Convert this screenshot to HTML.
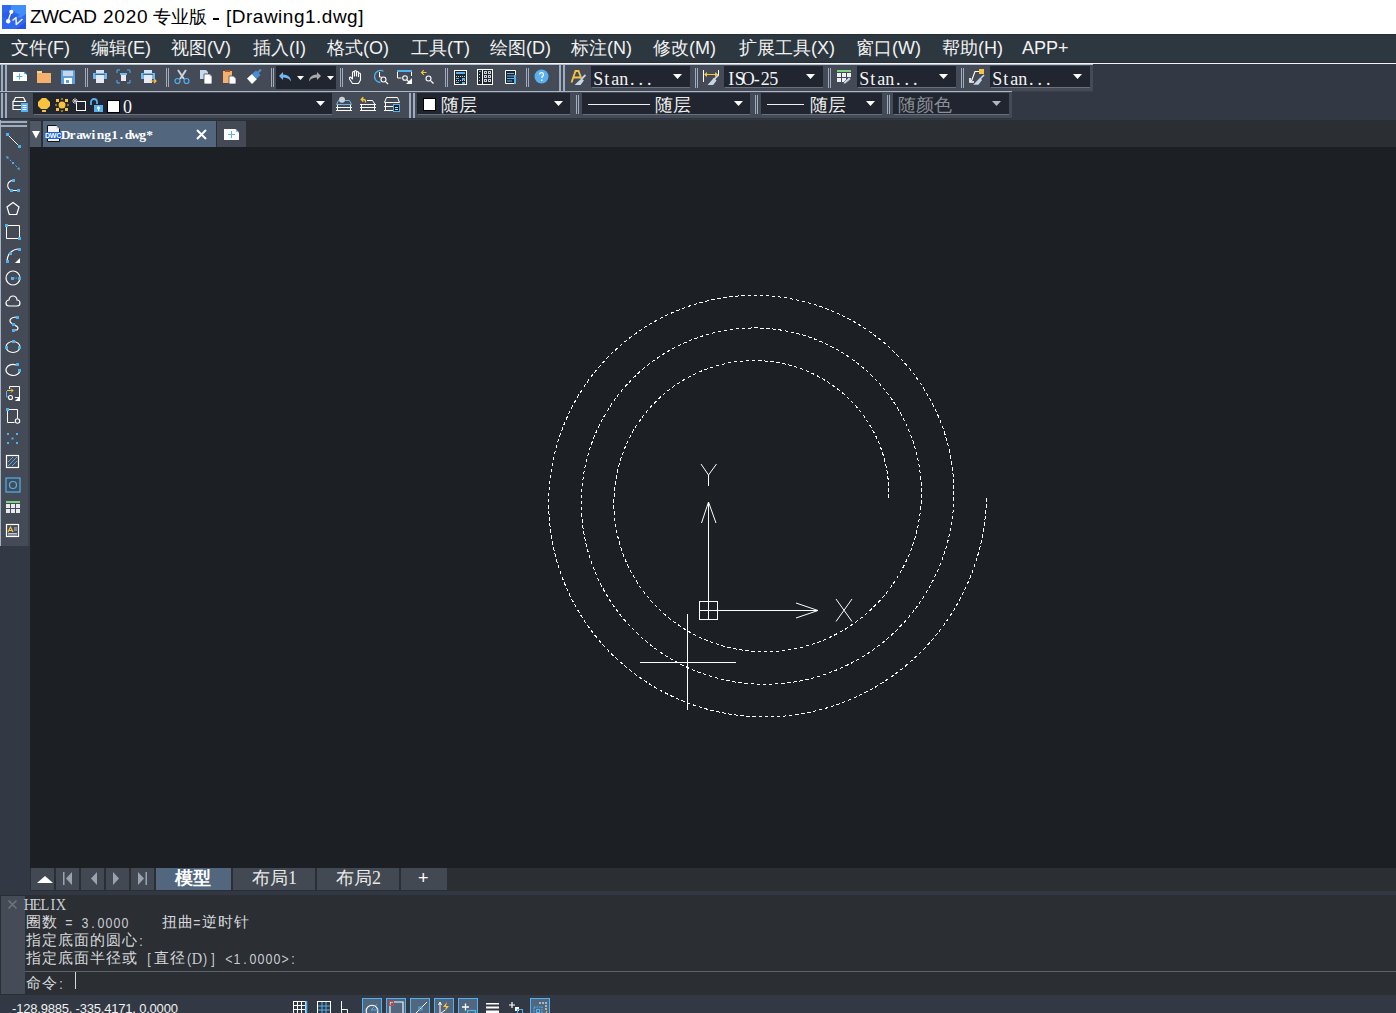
<!DOCTYPE html>
<html><head><meta charset="utf-8">
<style>
*{margin:0;padding:0;box-sizing:border-box}
html,body{width:1396px;height:1013px;overflow:hidden;background:#1c1f23;font-family:"Liberation Sans",sans-serif;position:relative}
.a{position:absolute;display:block}
.tx{white-space:nowrap}
</style></head><body>
<div class="a" style="left:0px;top:0px;width:1396px;height:34px;background:#ffffff;"></div>
<svg class="a" style="left:2px;top:5px" width="24" height="24" viewBox="0 0 24 24"><rect width="24" height="24" fill="#2f66f2"/><path d="M9 0h15v9l-6 4-9-6z" fill="#3f8ef9"/><path d="M0 9l9-4 9 5-9 4-9-2z" fill="#2a5ae6" opacity=".7"/><path d="M14 24l10-7v7z" fill="#2855e0"/><path d="M9.3 6.5L6 16" stroke="#fff" stroke-width="1.3"/><circle cx="9.3" cy="6.8" r="2.1" fill="#fff"/><circle cx="6.2" cy="16.3" r="2.2" fill="#fff"/><path d="M10.5 15.5L14 12.5L14.3 19.5L20.5 14" stroke="#e8ecf8" stroke-width="1.6" fill="none" stroke-linejoin="round"/></svg>
<div class="a tx" style="left:30px;top:4px;font-size:19px;color:#000;line-height:26px;letter-spacing:-0.7px">ZWCAD</div>
<div class="a tx" style="left:103px;top:4px;font-size:19px;color:#000;line-height:26px;letter-spacing:0.8px">2020</div>
<div class="a tx" style="left:153px;top:4px;font-size:18.2px;color:#000;line-height:26px;letter-spacing:0px">专业版</div>
<div class="a" style="left:213px;top:18px;width:6px;height:2px;background:#000;"></div>
<div class="a tx" style="left:226px;top:4px;font-size:19px;color:#000;line-height:26px;letter-spacing:0.5px">[Drawing1.dwg]</div>
<div class="a" style="left:0px;top:34px;width:1396px;height:1px;background:#262c33;"></div>
<div class="a" style="left:0px;top:35px;width:1396px;height:28px;background:#2d3740;"></div>
<div class="a" style="left:0px;top:62px;width:1396px;height:1px;background:#272d34;"></div>
<div class="a tx" style="left:11px;top:36px;font-size:18px;color:#f2f2f2;line-height:24px">文件(F)</div>
<div class="a tx" style="left:91px;top:36px;font-size:18px;color:#f2f2f2;line-height:24px">编辑(E)</div>
<div class="a tx" style="left:171px;top:36px;font-size:18px;color:#f2f2f2;line-height:24px">视图(V)</div>
<div class="a tx" style="left:253px;top:36px;font-size:18px;color:#f2f2f2;line-height:24px">插入(I)</div>
<div class="a tx" style="left:327px;top:36px;font-size:18px;color:#f2f2f2;line-height:24px">格式(O)</div>
<div class="a tx" style="left:411px;top:36px;font-size:18px;color:#f2f2f2;line-height:24px">工具(T)</div>
<div class="a tx" style="left:490px;top:36px;font-size:18px;color:#f2f2f2;line-height:24px">绘图(D)</div>
<div class="a tx" style="left:571px;top:36px;font-size:18px;color:#f2f2f2;line-height:24px">标注(N)</div>
<div class="a tx" style="left:653px;top:36px;font-size:18px;color:#f2f2f2;line-height:24px">修改(M)</div>
<div class="a tx" style="left:739px;top:36px;font-size:18px;color:#f2f2f2;line-height:24px">扩展工具(X)</div>
<div class="a tx" style="left:856px;top:36px;font-size:18px;color:#f2f2f2;line-height:24px">窗口(W)</div>
<div class="a tx" style="left:942px;top:36px;font-size:18px;color:#f2f2f2;line-height:24px">帮助(H)</div>
<div class="a tx" style="left:1022px;top:36px;font-size:18px;color:#f2f2f2;line-height:24px">APP+</div>
<div class="a" style="left:0px;top:63px;width:1396px;height:57px;background:#323944;"></div>
<div class="a" style="left:0px;top:63px;width:1396px;height:1px;background:#f4f6f8;"></div>
<div class="a" style="left:0px;top:64px;width:1093px;height:1px;background:#b4c0ce;"></div>
<div class="a" style="left:0px;top:65px;width:1093px;height:26px;background:#454b56;"></div>
<div class="a" style="left:0px;top:91px;width:1012px;height:1px;background:#a9b6c5;"></div>
<div class="a" style="left:0px;top:92px;width:1012px;height:26px;background:#454b56;"></div>
<div class="a" style="left:0px;top:118px;width:1012px;height:1px;background:#2e343c;"></div>
<div class="a" style="left:1012px;top:91px;width:81px;height:1px;background:#3a4049;"></div>
<div class="a" style="left:1px;top:65px;width:2px;height:26px;background:#9dacbf;"></div>
<div class="a" style="left:5px;top:65px;width:2px;height:26px;background:#9dacbf;"></div>
<svg class="a" style="left:12px;top:69px" width="16" height="16" viewBox="0 0 16 16"><path d="M1 3h11l3 3v6H1z" fill="#ffffff"/><path d="M12 2.5l2.5 2.5h-2.5z" fill="#4fb2f2"/><path d="M7.5 4.5v6M4.5 7.5h6" stroke="#4fb2f2" stroke-width="1"/></svg>
<svg class="a" style="left:36px;top:69px" width="16" height="16" viewBox="0 0 16 16"><rect x="1" y="2" width="5" height="2" fill="#f9d58e"/><rect x="1" y="4" width="14" height="10" fill="#f5b16b"/></svg>
<svg class="a" style="left:60px;top:69px" width="16" height="16" viewBox="0 0 16 16"><path d="M1 1h13l1 1v13H1z" fill="#5a9fe0"/><rect x="3" y="2" width="10" height="5" fill="#c8d6e8"/><rect x="4" y="9" width="8" height="6" fill="#ffffff"/><rect x="6" y="11" width="3" height="3" fill="#5a9fe0"/></svg>
<div class="a" style="left:85px;top:68px;width:1px;height:19px;background:#9dacbf;"></div>
<div class="a" style="left:87px;top:68px;width:1px;height:19px;background:#9dacbf;"></div>
<svg class="a" style="left:93px;top:69px" width="16" height="16" viewBox="0 0 16 16"><rect x="3" y="1" width="8" height="3" fill="#dde3ec"/><rect x="0" y="4" width="14" height="6" fill="#72b8f0"/><rect x="2" y="5" width="10" height="1" fill="#2e6aa8"/><rect x="3" y="6" width="8" height="8" fill="#e6ebf3"/></svg>
<svg class="a" style="left:116px;top:69px" width="16" height="16" viewBox="0 0 16 16"><path d="M1 4V1h3M11 1h3v3M14 11v3h-3M4 14H1v-3" stroke="#4fb2f2" fill="none" stroke-width="1"/><rect x="4" y="4" width="7" height="2" fill="#72b8f0"/><rect x="5" y="6" width="5" height="6" fill="#e6ebf3"/></svg>
<svg class="a" style="left:141px;top:69px" width="16" height="16" viewBox="0 0 16 16"><rect x="3" y="1" width="8" height="3" fill="#dde3ec"/><rect x="0" y="4" width="14" height="6" fill="#72b8f0"/><rect x="2" y="5" width="10" height="1" fill="#2e6aa8"/><rect x="3" y="6" width="8" height="8" fill="#e6ebf3"/><path d="M9 12h6M13 10l2 2-2 2" stroke="#f8c440" fill="none" stroke-width="1.2"/></svg>
<div class="a" style="left:166px;top:68px;width:1px;height:19px;background:#9dacbf;"></div>
<div class="a" style="left:168px;top:68px;width:1px;height:19px;background:#9dacbf;"></div>
<svg class="a" style="left:174px;top:69px" width="16" height="16" viewBox="0 0 16 16"><path d="M4 1l6 9M12 1l-6 9" stroke="#c9d2de" stroke-width="2"/><circle cx="3.5" cy="12" r="2.5" stroke="#4fb2f2" fill="none" stroke-width="1.2"/><circle cx="12.5" cy="12" r="2.5" stroke="#4fb2f2" fill="none" stroke-width="1.2"/></svg>
<svg class="a" style="left:199px;top:69px" width="16" height="16" viewBox="0 0 16 16"><path d="M1 1h6l2 2v7H1z" fill="#c6d8ee"/><path d="M5 5h5.5l2.5 2.5V15H5z" fill="#ffffff" stroke="#454b56" stroke-width="0.8"/><path d="M10.5 5v2.5H13" fill="#c8ccd2"/></svg>
<svg class="a" style="left:222px;top:69px" width="16" height="16" viewBox="0 0 16 16"><rect x="1" y="2" width="9" height="12" fill="#f5b16b"/><rect x="3" y="1" width="5" height="2" fill="#a8552a"/><path d="M7 7h4.5l2.5 2.5V15H7z" fill="#ffffff" stroke="#454b56" stroke-width="0.8"/></svg>
<svg class="a" style="left:246px;top:69px" width="16" height="16" viewBox="0 0 16 16"><path d="M1 9.5l5-4.5 5 5-5 5z" fill="#ffffff"/><path d="M6 5l4-3.5 4.5 4.5-4 4z" fill="#4a8fd6"/><path d="M12 3.5l3-3" stroke="#4a8fd6" stroke-width="2.2"/></svg>
<div class="a" style="left:271px;top:68px;width:1px;height:19px;background:#9dacbf;"></div>
<div class="a" style="left:273px;top:68px;width:1px;height:19px;background:#9dacbf;"></div>
<div class="a" style="left:276px;top:66px;width:60px;height:23px;background:#20252f;"></div>
<svg class="a" style="left:279px;top:72px" width="12" height="10" viewBox="0 0 12 10"><path d="M4 0L0 4l4 4V5.5c4 0 6 1 8 4c0-4-3-7-8-7z" fill="#78b6f0"/></svg>
<svg class="a" style="left:297px;top:76px" width="7" height="4" viewBox="0 0 7 4"><path d="M0 0h7L3.5 4z" fill="#fff"/></svg>
<svg class="a" style="left:309px;top:72px" width="12" height="10" viewBox="0 0 12 10"><path d="M8 0l4 4-4 4V5.5c-4 0-6 1-8 4c0-4 3-7 8-7z" fill="#a9a9a9"/></svg>
<svg class="a" style="left:327px;top:76px" width="7" height="4" viewBox="0 0 7 4"><path d="M0 0h7L3.5 4z" fill="#fff"/></svg>
<div class="a" style="left:340px;top:68px;width:1px;height:19px;background:#9dacbf;"></div>
<div class="a" style="left:342px;top:68px;width:1px;height:19px;background:#9dacbf;"></div>
<svg class="a" style="left:348px;top:69px" width="16" height="16" viewBox="0 0 16 16"><path d="M4.5 14.5L1.5 10V8.5L2.5 8l2 2V3.5a1 1 0 0 1 2 0V7V2.5a1 1 0 0 1 2 0V7V3.5a1 1 0 0 1 2 0V7.5V5a1 1 0 0 1 2 0V11l-2 3.5z" stroke="#ffffff" fill="none" stroke-width="1.1" stroke-linejoin="round"/></svg>
<svg class="a" style="left:373px;top:69px" width="16" height="16" viewBox="0 0 16 16"><path d="M10.5 2.3A6 6 0 1 0 7.5 13.5" stroke="#4fb2f2" fill="none" stroke-width="1.3"/><path d="M6.5 3v5h2" stroke="#ffffff" fill="none" stroke-width="1"/><circle cx="10.5" cy="10.5" r="2.5" stroke="#ffffff" fill="none" stroke-width="1.1"/><path d="M12.3 12.3l2.7 2.7" stroke="#ffffff" stroke-width="1.2"/></svg>
<svg class="a" style="left:397px;top:69px" width="16" height="16" viewBox="0 0 16 16"><rect x="0" y="1" width="15" height="2" fill="#4fb2f2"/><path d="M0.5 3v6h4M14.5 3v4" stroke="#ffffff" fill="none" stroke-width="1"/><circle cx="8" cy="9" r="2.3" stroke="#ffffff" fill="none" stroke-width="1.1"/><path d="M10 11l2 2" stroke="#ffffff" stroke-width="1.1"/><path d="M15 9v6H9z" fill="#ffffff"/></svg>
<svg class="a" style="left:420px;top:69px" width="16" height="16" viewBox="0 0 16 16"><path d="M1.5 3.5h5M3.8 1.2L1.5 3.5l2.3 2.3" stroke="#f8c440" fill="none" stroke-width="1.1"/><circle cx="8.5" cy="9.5" r="2.5" stroke="#ffffff" fill="none" stroke-width="1.1"/><path d="M10.3 11.3l3.2 3.2" stroke="#ffffff" stroke-width="1.2"/></svg>
<div class="a" style="left:445px;top:68px;width:1px;height:19px;background:#9dacbf;"></div>
<div class="a" style="left:447px;top:68px;width:1px;height:19px;background:#9dacbf;"></div>
<svg class="a" style="left:452px;top:69px" width="16" height="16" viewBox="0 0 16 16"><rect x="2" y="1" width="13" height="15" fill="#fff"/><rect x="3" y="2" width="11" height="13" fill="#20252d"/><rect x="4" y="3" width="9" height="2" fill="#4fb2f2"/><path d="M4 7.5h9M4 11.5h9" stroke="#c8d0da" stroke-width="1" stroke-dasharray="1 1"/><rect x="4" y="9" width="3" height="1" fill="#4fb2f2"/><rect x="10" y="9" width="3" height="2" fill="#4fb2f2"/><rect x="4" y="13" width="3" height="1" fill="#4fb2f2"/><rect x="10" y="13" width="3" height="2" fill="#4fb2f2"/></svg>
<svg class="a" style="left:477px;top:69px" width="16" height="16" viewBox="0 0 16 16"><rect x="0.5" y="0.5" width="15" height="15" fill="#20252d" stroke="#ffffff" stroke-width="1"/><path d="M5.5 1v14" stroke="#ffffff"/><rect x="2" y="2" width="2" height="1" fill="#4fb2f2"/><path d="M2 5.5h2M2 8.5h2M2 11.5h2" stroke="#c8d0da" stroke-dasharray="1 1"/><g fill="none" stroke="#c8d0da"><rect x="7.5" y="2.5" width="2" height="2"/><rect x="11.5" y="2.5" width="2" height="2"/><rect x="7.5" y="6.5" width="2" height="2"/><rect x="11.5" y="6.5" width="2" height="2"/><rect x="7.5" y="10.5" width="2" height="2"/><rect x="11.5" y="10.5" width="2" height="2"/></g></svg>
<svg class="a" style="left:503px;top:69px" width="16" height="16" viewBox="0 0 16 16"><path d="M2.5 1.5h10v13h-10z" fill="#20252d" stroke="#ffffff" stroke-width="1"/><path d="M4 4.5h7M4 7h7M4 9.5h7M4 12h5" stroke="#4fb2f2" stroke-width="1"/><rect x="11" y="6" width="2" height="9" fill="#4fb2f2"/></svg>
<div class="a" style="left:526px;top:68px;width:1px;height:19px;background:#9dacbf;"></div>
<div class="a" style="left:528px;top:68px;width:1px;height:19px;background:#9dacbf;"></div>
<svg class="a" style="left:534px;top:69px" width="16" height="16" viewBox="0 0 16 16"><circle cx="7.5" cy="7.5" r="7" fill="#58b0f0"/><path d="M5.5 5.5a2 2 0 1 1 2.5 2v1.5" stroke="#ffffff" fill="none" stroke-width="1.2"/><rect x="7" y="10.5" width="1.5" height="1.5" fill="#ffffff"/></svg>
<div class="a" style="left:559px;top:65px;width:2px;height:26px;background:#9dacbf;"></div>
<div class="a" style="left:563px;top:65px;width:2px;height:26px;background:#9dacbf;"></div>
<svg class="a" style="left:570px;top:69px" width="16" height="16" viewBox="0 0 16 16"><path d="M1.5 13.5L5.5 2H8.5L11 8.5M3.5 8.5H11.5" stroke="#f8c440" fill="none" stroke-width="1.8"/><path d="M6.5 15.5l5-5 1.2 1.2-3 4z M11 10.5l4.5-4.5" stroke="#c8d6e8" fill="#c8d6e8" stroke-width="1.8"/></svg>
<div class="a" style="left:591px;top:66px;width:99px;height:21px;background:#20252f;"></div>
<div class="a" style="left:592px;top:87px;width:98px;height:1px;background:#6a7079;"></div>
<svg class="a" style="left:673px;top:74px" width="9" height="5" viewBox="0 0 9 5"><path d="M0 0h9L4.5 5z" fill="#ffffff"/></svg>
<div class="a" style="left:591.25px;top:69px;width:14px;text-align:center;font-family:'Liberation Serif',serif;font-size:18px;color:#f4f4f4;line-height:20px">S</div><div class="a" style="left:599.75px;top:69px;width:14px;text-align:center;font-family:'Liberation Serif',serif;font-size:18px;color:#f4f4f4;line-height:20px">t</div><div class="a" style="left:608.25px;top:69px;width:14px;text-align:center;font-family:'Liberation Serif',serif;font-size:18px;color:#f4f4f4;line-height:20px">a</div><div class="a" style="left:616.75px;top:69px;width:14px;text-align:center;font-family:'Liberation Serif',serif;font-size:18px;color:#f4f4f4;line-height:20px">n</div><div class="a" style="left:625.25px;top:69px;width:14px;text-align:center;font-family:'Liberation Serif',serif;font-size:18px;color:#f4f4f4;line-height:20px">.</div><div class="a" style="left:633.75px;top:69px;width:14px;text-align:center;font-family:'Liberation Serif',serif;font-size:18px;color:#f4f4f4;line-height:20px">.</div><div class="a" style="left:642.25px;top:69px;width:14px;text-align:center;font-family:'Liberation Serif',serif;font-size:18px;color:#f4f4f4;line-height:20px">.</div>
<div class="a" style="left:695px;top:68px;width:1px;height:20px;background:#9dacbf;"></div>
<div class="a" style="left:697px;top:68px;width:1px;height:20px;background:#9dacbf;"></div>
<svg class="a" style="left:703px;top:69px" width="16" height="16" viewBox="0 0 16 16"><path d="M0.5 1v12M15.5 1v6" stroke="#ffffff" stroke-width="1"/><path d="M2 5.5h13" stroke="#f8c440" stroke-width="1"/><path d="M1 5.5l3-2.5v5zM15 5.5l-3-2.5v5z" fill="#f8c440"/><path d="M6 15.5l5-5.5 1.5 1.5-3 4z M11 10.5l4.5-4.5" stroke="#c8d6e8" fill="#c8d6e8" stroke-width="1.6"/></svg>
<div class="a" style="left:724px;top:66px;width:99px;height:21px;background:#20252f;"></div>
<div class="a" style="left:725px;top:87px;width:98px;height:1px;background:#6a7079;"></div>
<svg class="a" style="left:806px;top:74px" width="9" height="5" viewBox="0 0 9 5"><path d="M0 0h9L4.5 5z" fill="#ffffff"/></svg>
<div class="a" style="left:724.25px;top:69px;width:14px;text-align:center;font-family:'Liberation Serif',serif;font-size:18px;color:#f4f4f4;line-height:20px">I</div><div class="a" style="left:732.75px;top:69px;width:14px;text-align:center;font-family:'Liberation Serif',serif;font-size:18px;color:#f4f4f4;line-height:20px">S</div><div class="a" style="left:741.25px;top:69px;width:14px;text-align:center;font-family:'Liberation Serif',serif;font-size:18px;color:#f4f4f4;line-height:20px">O</div><div class="a" style="left:749.75px;top:69px;width:14px;text-align:center;font-family:'Liberation Serif',serif;font-size:18px;color:#f4f4f4;line-height:20px">-</div><div class="a" style="left:758.25px;top:69px;width:14px;text-align:center;font-family:'Liberation Serif',serif;font-size:18px;color:#f4f4f4;line-height:20px">2</div><div class="a" style="left:766.75px;top:69px;width:14px;text-align:center;font-family:'Liberation Serif',serif;font-size:18px;color:#f4f4f4;line-height:20px">5</div>
<div class="a" style="left:828px;top:68px;width:1px;height:20px;background:#9dacbf;"></div>
<div class="a" style="left:830px;top:68px;width:1px;height:20px;background:#9dacbf;"></div>
<svg class="a" style="left:836px;top:69px" width="16" height="16" viewBox="0 0 16 16"><rect x="1" y="1" width="14" height="2" fill="#7ed37e"/><g fill="#eef0f3"><rect x="1" y="4" width="4" height="4"/><rect x="6" y="4" width="4" height="4"/><rect x="11" y="4" width="4" height="4"/><rect x="1" y="9" width="4" height="4"/><rect x="6" y="9" width="4" height="4"/></g><path d="M7 14l6-6 2 2-6 5z" fill="#c8d6e8" stroke="#434a55" stroke-width="0.6"/></svg>
<div class="a" style="left:857px;top:66px;width:99px;height:21px;background:#20252f;"></div>
<div class="a" style="left:858px;top:87px;width:98px;height:1px;background:#6a7079;"></div>
<svg class="a" style="left:939px;top:74px" width="9" height="5" viewBox="0 0 9 5"><path d="M0 0h9L4.5 5z" fill="#ffffff"/></svg>
<div class="a" style="left:857.25px;top:69px;width:14px;text-align:center;font-family:'Liberation Serif',serif;font-size:18px;color:#f4f4f4;line-height:20px">S</div><div class="a" style="left:865.75px;top:69px;width:14px;text-align:center;font-family:'Liberation Serif',serif;font-size:18px;color:#f4f4f4;line-height:20px">t</div><div class="a" style="left:874.25px;top:69px;width:14px;text-align:center;font-family:'Liberation Serif',serif;font-size:18px;color:#f4f4f4;line-height:20px">a</div><div class="a" style="left:882.75px;top:69px;width:14px;text-align:center;font-family:'Liberation Serif',serif;font-size:18px;color:#f4f4f4;line-height:20px">n</div><div class="a" style="left:891.25px;top:69px;width:14px;text-align:center;font-family:'Liberation Serif',serif;font-size:18px;color:#f4f4f4;line-height:20px">.</div><div class="a" style="left:899.75px;top:69px;width:14px;text-align:center;font-family:'Liberation Serif',serif;font-size:18px;color:#f4f4f4;line-height:20px">.</div><div class="a" style="left:908.25px;top:69px;width:14px;text-align:center;font-family:'Liberation Serif',serif;font-size:18px;color:#f4f4f4;line-height:20px">.</div>
<div class="a" style="left:961px;top:68px;width:1px;height:20px;background:#9dacbf;"></div>
<div class="a" style="left:963px;top:68px;width:1px;height:20px;background:#9dacbf;"></div>
<svg class="a" style="left:969px;top:69px" width="16" height="16" viewBox="0 0 16 16"><rect x="10" y="0" width="5" height="5" fill="#f8c440"/><path d="M10 2.5H6L2.5 12" stroke="#ffffff" fill="none" stroke-width="1.1"/><path d="M1 9v4h4" stroke="#ffffff" fill="none" stroke-width="1.6"/><path d="M6 15l5-5 1 1-3 4z M11 10l4-4" stroke="#c8d6e8" fill="#c8d6e8" stroke-width="1.6"/></svg>
<div class="a" style="left:990px;top:66px;width:100px;height:21px;background:#20252f;"></div>
<div class="a" style="left:991px;top:87px;width:99px;height:1px;background:#6a7079;"></div>
<svg class="a" style="left:1073px;top:74px" width="9" height="5" viewBox="0 0 9 5"><path d="M0 0h9L4.5 5z" fill="#ffffff"/></svg>
<div class="a" style="left:990.25px;top:69px;width:14px;text-align:center;font-family:'Liberation Serif',serif;font-size:18px;color:#f4f4f4;line-height:20px">S</div><div class="a" style="left:998.75px;top:69px;width:14px;text-align:center;font-family:'Liberation Serif',serif;font-size:18px;color:#f4f4f4;line-height:20px">t</div><div class="a" style="left:1007.25px;top:69px;width:14px;text-align:center;font-family:'Liberation Serif',serif;font-size:18px;color:#f4f4f4;line-height:20px">a</div><div class="a" style="left:1015.75px;top:69px;width:14px;text-align:center;font-family:'Liberation Serif',serif;font-size:18px;color:#f4f4f4;line-height:20px">n</div><div class="a" style="left:1024.25px;top:69px;width:14px;text-align:center;font-family:'Liberation Serif',serif;font-size:18px;color:#f4f4f4;line-height:20px">.</div><div class="a" style="left:1032.75px;top:69px;width:14px;text-align:center;font-family:'Liberation Serif',serif;font-size:18px;color:#f4f4f4;line-height:20px">.</div><div class="a" style="left:1041.25px;top:69px;width:14px;text-align:center;font-family:'Liberation Serif',serif;font-size:18px;color:#f4f4f4;line-height:20px">.</div>
<div class="a" style="left:1px;top:93px;width:2px;height:25px;background:#9dacbf;"></div>
<div class="a" style="left:5px;top:93px;width:2px;height:25px;background:#9dacbf;"></div>
<svg class="a" style="left:12px;top:96px" width="16" height="16" viewBox="0 0 16 16"><path d="M3.5 1.5H11.5L13.5 5.5H1.5z" stroke="#ffffff" fill="none" stroke-width="1.2"/><path d="M0.5 5.5h10M0.5 9.5h9M0.5 13.5h9M1 5.5v8" stroke="#ffffff" fill="none" stroke-width="1.2"/><rect x="9" y="7" width="7" height="9" fill="#58b0f0"/><path d="M10.5 9.5h4M10.5 11.5h4M10.5 13.5h4" stroke="#ffffff" stroke-width="1"/></svg>
<div class="a" style="left:33px;top:93px;width:299px;height:21px;background:#20252f;"></div>
<div class="a" style="left:34px;top:114px;width:298px;height:1px;background:#6a7079;"></div>
<svg class="a" style="left:316px;top:101px" width="9" height="5" viewBox="0 0 9 5"><path d="M0 0h9L4.5 5z" fill="#ffffff"/></svg>
<svg class="a" style="left:38px;top:98px" width="16" height="16" viewBox="0 0 16 16"><path d="M4 0h4l4 4v4l-3 3H3L0 8V4z" fill="#f8c440"/><rect x="4" y="12" width="4" height="2" fill="#f8c440"/></svg>
<svg class="a" style="left:55px;top:98px" width="16" height="16" viewBox="0 0 16 16"><g fill="#f8c440"><rect x="1" y="1" width="3" height="3"/><rect x="10" y="1" width="3" height="3"/><rect x="1" y="10" width="3" height="3"/><rect x="10" y="10" width="3" height="3"/><circle cx="7" cy="7" r="3.5"/><path d="M5.5 1.5h3L7 0zM5.5 12.5h3L7 14zM1.5 5.5v3L0 7zM12.5 5.5v3L14 7z"/></g></svg>
<svg class="a" style="left:72px;top:98px" width="16" height="16" viewBox="0 0 16 16"><rect x="4.5" y="3.5" width="9" height="9" fill="none" stroke="#ffffff" stroke-width="1"/><path d="M3 0v6M0 3h6M1 1l4 4M5 1L1 5" stroke="#c0c4c8" stroke-width="1"/></svg>
<svg class="a" style="left:89px;top:98px" width="16" height="16" viewBox="0 0 16 16"><path d="M2 7V4a3 3 0 0 1 6 0v2" stroke="#58b0f0" fill="none" stroke-width="1.8"/><rect x="5" y="7" width="9" height="7" fill="#58b0f0"/><circle cx="9.5" cy="10" r="1.4" fill="#ffffff"/><rect x="9" y="10" width="1.2" height="3" fill="#ffffff"/></svg>
<div class="a" style="left:107px;top:100px;width:13px;height:13px;background:#000;"></div>
<div class="a" style="left:108px;top:101px;width:11px;height:11px;background:#fff;"></div>
<div class="a tx" style="left:123px;top:96px;font-family:'Liberation Serif',serif;font-size:18px;color:#f4f4f4;line-height:22px">0</div>
<svg class="a" style="left:336px;top:96px" width="16" height="16" viewBox="0 0 16 16"><path d="M0 11.5h16M0 14.5h16M1.5 8.5v6M14.5 8.5v6" stroke="#ffffff" fill="none" stroke-width="1"/><path d="M2.5 4.5H13.5L15.5 8.5H0.5z" stroke="#6fb6f2" fill="none" stroke-width="1"/><circle cx="6" cy="3.8" r="3" fill="#c8d0dc"/></svg>
<svg class="a" style="left:360px;top:96px" width="16" height="16" viewBox="0 0 16 16"><path d="M0 8.5h16M0 11.5h16M0 14.5h16M1.5 8.5v6M14.5 8.5v6M7 4.5h5.5l2.5 4" stroke="#ffffff" fill="none" stroke-width="1"/><path d="M5.5 6.5v-1a2 2 0 0 0-2-2H1.5M3.3 1.3L1.2 3.5l2.1 2.1" stroke="#f8c440" fill="none" stroke-width="1.3"/></svg>
<svg class="a" style="left:384px;top:96px" width="16" height="16" viewBox="0 0 16 16"><path d="M2.5 1.5H13.5L15.5 6.5H0.5z" stroke="#ffffff" fill="none" stroke-width="1"/><path d="M0 10.5h9M0 14.5h9M1.5 6.5v8" stroke="#ffffff" fill="none" stroke-width="1"/><rect x="9.5" y="8.5" width="6" height="7" fill="#20252d" stroke="#58b0f0" stroke-width="1"/><path d="M11 11.5h3M11 13.5h3" stroke="#c0e4ff" stroke-width="1"/></svg>
<div class="a" style="left:409px;top:93px;width:2px;height:25px;background:#9dacbf;"></div>
<div class="a" style="left:413px;top:93px;width:2px;height:25px;background:#9dacbf;"></div>
<div class="a" style="left:417px;top:93px;width:153px;height:21px;background:#20252f;"></div>
<div class="a" style="left:418px;top:114px;width:152px;height:1px;background:#6a7079;"></div>
<svg class="a" style="left:554px;top:101px" width="9" height="5" viewBox="0 0 9 5"><path d="M0 0h9L4.5 5z" fill="#ffffff"/></svg>
<div class="a" style="left:423px;top:98px;width:13px;height:13px;background:#000;"></div>
<div class="a" style="left:424px;top:99px;width:11px;height:11px;background:#fff;"></div>
<div class="a tx" style="left:441px;top:94px;font-size:18px;font-weight:200;color:#f0f0f0;line-height:22px">随层</div>
<div class="a" style="left:576px;top:95px;width:1px;height:19px;background:#9dacbf;"></div>
<div class="a" style="left:578px;top:95px;width:1px;height:19px;background:#9dacbf;"></div>
<div class="a" style="left:582px;top:93px;width:168px;height:21px;background:#20252f;"></div>
<div class="a" style="left:583px;top:114px;width:167px;height:1px;background:#6a7079;"></div>
<svg class="a" style="left:734px;top:101px" width="9" height="5" viewBox="0 0 9 5"><path d="M0 0h9L4.5 5z" fill="#ffffff"/></svg>
<div class="a" style="left:588px;top:104px;width:62px;height:1px;background:#f0f0f0;"></div>
<div class="a tx" style="left:655px;top:94px;font-size:18px;font-weight:200;color:#f0f0f0;line-height:22px">随层</div>
<div class="a" style="left:755px;top:95px;width:1px;height:19px;background:#9dacbf;"></div>
<div class="a" style="left:757px;top:95px;width:1px;height:19px;background:#9dacbf;"></div>
<div class="a" style="left:761px;top:93px;width:121px;height:21px;background:#20252f;"></div>
<div class="a" style="left:762px;top:114px;width:120px;height:1px;background:#6a7079;"></div>
<svg class="a" style="left:866px;top:101px" width="9" height="5" viewBox="0 0 9 5"><path d="M0 0h9L4.5 5z" fill="#ffffff"/></svg>
<div class="a" style="left:767px;top:104px;width:37px;height:1px;background:#f0f0f0;"></div>
<div class="a tx" style="left:810px;top:94px;font-size:18px;font-weight:200;color:#f0f0f0;line-height:22px">随层</div>
<div class="a" style="left:887px;top:95px;width:1px;height:19px;background:#9dacbf;"></div>
<div class="a" style="left:889px;top:95px;width:1px;height:19px;background:#9dacbf;"></div>
<div class="a" style="left:893px;top:93px;width:116px;height:21px;background:#20252f;"></div>
<div class="a" style="left:894px;top:114px;width:115px;height:1px;background:#6a7079;"></div>
<svg class="a" style="left:992px;top:101px" width="9" height="5" viewBox="0 0 9 5"><path d="M0 0h9L4.5 5z" fill="#b4b8bd"/></svg>
<div class="a tx" style="left:898px;top:94px;font-size:18px;font-weight:200;color:#8a8f96;line-height:22px">随颜色</div>
<div class="a" style="left:0px;top:120px;width:1396px;height:27px;background:#2b2e33;"></div>
<div class="a" style="left:30px;top:121px;width:11px;height:26px;background:#4d5864;"></div>
<svg class="a" style="left:32px;top:131px" width="8" height="8" viewBox="0 0 8 8"><path d="M0 0h8L4 7.5z" fill="#fff"/></svg>
<div class="a" style="left:43px;top:121px;width:173px;height:26px;background:#52667e;"></div>
<svg class="a" style="left:45px;top:125px" width="16" height="18" viewBox="0 0 16 18"><path d="M2.5 0.5h9l3 3v13h-12z" fill="#f4f4f4" stroke="#111" stroke-width="1"/><path d="M11.5 0.5v3h3" fill="#ccc"/><rect x="0" y="7" width="16" height="7" fill="#1e64e0"/><text x="8" y="13" font-size="7" font-family="Liberation Sans" font-weight="bold" fill="#fff" text-anchor="middle" letter-spacing="-0.3">DWC</text></svg>
<div class="a" style="left:59.50px;top:126px;width:12px;text-align:center;font-family:'Liberation Serif',serif;font-size:13.5px;font-weight:bold;color:#fff;line-height:18px">D</div><div class="a" style="left:66.50px;top:126px;width:12px;text-align:center;font-family:'Liberation Serif',serif;font-size:13.5px;font-weight:bold;color:#fff;line-height:18px">r</div><div class="a" style="left:73.50px;top:126px;width:12px;text-align:center;font-family:'Liberation Serif',serif;font-size:13.5px;font-weight:bold;color:#fff;line-height:18px">a</div><div class="a" style="left:80.50px;top:126px;width:12px;text-align:center;font-family:'Liberation Serif',serif;font-size:13.5px;font-weight:bold;color:#fff;line-height:18px">w</div><div class="a" style="left:87.50px;top:126px;width:12px;text-align:center;font-family:'Liberation Serif',serif;font-size:13.5px;font-weight:bold;color:#fff;line-height:18px">i</div><div class="a" style="left:94.50px;top:126px;width:12px;text-align:center;font-family:'Liberation Serif',serif;font-size:13.5px;font-weight:bold;color:#fff;line-height:18px">n</div><div class="a" style="left:101.50px;top:126px;width:12px;text-align:center;font-family:'Liberation Serif',serif;font-size:13.5px;font-weight:bold;color:#fff;line-height:18px">g</div><div class="a" style="left:108.50px;top:126px;width:12px;text-align:center;font-family:'Liberation Serif',serif;font-size:13.5px;font-weight:bold;color:#fff;line-height:18px">1</div><div class="a" style="left:115.50px;top:126px;width:12px;text-align:center;font-family:'Liberation Serif',serif;font-size:13.5px;font-weight:bold;color:#fff;line-height:18px">.</div><div class="a" style="left:122.50px;top:126px;width:12px;text-align:center;font-family:'Liberation Serif',serif;font-size:13.5px;font-weight:bold;color:#fff;line-height:18px">d</div><div class="a" style="left:129.50px;top:126px;width:12px;text-align:center;font-family:'Liberation Serif',serif;font-size:13.5px;font-weight:bold;color:#fff;line-height:18px">w</div><div class="a" style="left:136.50px;top:126px;width:12px;text-align:center;font-family:'Liberation Serif',serif;font-size:13.5px;font-weight:bold;color:#fff;line-height:18px">g</div><div class="a" style="left:143.50px;top:126px;width:12px;text-align:center;font-family:'Liberation Serif',serif;font-size:13.5px;font-weight:bold;color:#fff;line-height:18px">*</div>
<svg class="a" style="left:196px;top:129px" width="11" height="11" viewBox="0 0 11 11"><path d="M1 1l9 9M10 1L1 10" stroke="#fff" stroke-width="2"/></svg>
<div class="a" style="left:217px;top:121px;width:29px;height:26px;background:#434a55;"></div>
<svg class="a" style="left:224px;top:129px" width="15" height="11" viewBox="0 0 15 11"><path d="M0 0h11.5l3.5 3.5V11H0z" fill="#fff"/><path d="M12 0.5l2.5 2.5h-2.5z" fill="#80c4f4"/><path d="M7.5 2v7M4 5.5h7" stroke="#58b0f0" stroke-width="1"/></svg>
<div class="a" style="left:30px;top:147px;width:1366px;height:721px;background:#1c1f23;"></div>
<svg class="a" style="left:0;top:0" width="1396" height="1013"><polyline points="888.70,498.00 888.77,495.97 888.80,493.94 888.80,491.90 888.77,489.87 888.71,487.83 888.61,485.80 888.49,483.76 888.33,481.73 888.14,479.69 887.91,477.66 887.66,475.63 887.37,473.61 887.05,471.59 886.70,469.57 886.32,467.55 885.90,465.54 885.46,463.54 884.98,461.55 884.47,459.55 883.93,457.57 883.35,455.60 882.75,453.63 882.11,451.67 881.45,449.72 880.75,447.78 880.02,445.85 879.26,443.93 878.47,442.02 877.65,440.12 876.80,438.23 875.92,436.36 875.00,434.50 874.06,432.65 873.09,430.82 872.09,429.00 871.06,427.20 870.01,425.41 868.92,423.64 867.81,421.88 866.66,420.14 865.49,418.42 864.29,416.71 863.07,415.03 861.81,413.36 860.53,411.71 859.23,410.08 857.89,408.47 856.53,406.88 855.15,405.31 853.74,403.76 852.30,402.23 850.84,400.73 849.36,399.24 847.85,397.78 846.32,396.35 844.76,394.93 843.19,393.54 841.58,392.18 839.96,390.84 838.32,389.52 836.65,388.23 834.96,386.96 833.25,385.72 831.52,384.51 829.77,383.32 828.01,382.16 826.22,381.03 824.41,379.92 822.59,378.85 820.75,377.80 818.89,376.78 817.01,375.79 815.12,374.82 813.21,373.89 811.28,372.99 809.34,372.11 807.39,371.27 805.42,370.46 803.44,369.67 801.44,368.92 799.43,368.20 797.41,367.51 795.38,366.85 793.33,366.23 791.28,365.63 789.21,365.07 787.14,364.54 785.05,364.04 782.96,363.58 780.86,363.15 778.75,362.75 776.63,362.38 774.51,362.05 772.38,361.75 770.24,361.48 768.10,361.25 765.96,361.05 763.81,360.88 761.66,360.75 759.50,360.65 757.34,360.59 755.18,360.55 753.02,360.56 750.86,360.60 748.69,360.67 746.53,360.77 744.37,360.91 742.20,361.09 740.04,361.29 737.89,361.54 735.73,361.81 733.58,362.12 731.43,362.47 729.29,362.84 727.15,363.26 725.02,363.70 722.89,364.18 720.77,364.69 718.66,365.24 716.55,365.82 714.46,366.44 712.37,367.08 710.29,367.76 708.22,368.48 706.16,369.22 704.11,370.00 702.07,370.81 700.05,371.66 698.03,372.53 696.03,373.44 694.05,374.38 692.07,375.35 690.12,376.36 688.17,377.39 686.24,378.46 684.33,379.55 682.44,380.68 680.56,381.84 678.70,383.03 676.85,384.24 675.03,385.49 673.22,386.77 671.43,388.07 669.66,389.41 667.92,390.77 666.19,392.16 664.48,393.58 662.80,395.02 661.14,396.50 659.50,398.00 657.88,399.52 656.29,401.08 654.72,402.65 653.17,404.26 651.65,405.89 650.15,407.54 648.68,409.22 647.24,410.92 645.82,412.65 644.43,414.39 643.06,416.16 641.72,417.96 640.41,419.77 639.13,421.61 637.87,423.47 636.65,425.35 635.45,427.24 634.28,429.16 633.14,431.10 632.04,433.05 630.96,435.03 629.91,437.02 628.90,439.03 627.91,441.06 626.96,443.10 626.04,445.16 625.15,447.23 624.29,449.32 623.46,451.42 622.67,453.54 621.91,455.67 621.19,457.82 620.49,459.97 619.83,462.14 619.21,464.32 618.62,466.51 618.06,468.71 617.54,470.92 617.05,473.14 616.60,475.37 616.18,477.60 615.79,479.85 615.45,482.10 615.13,484.35 614.85,486.62 614.61,488.88 614.41,491.16 614.23,493.43 614.10,495.72 614.00,498.00 613.94,500.29 613.91,502.58 613.92,504.87 613.96,507.16 614.04,509.45 614.16,511.74 614.31,514.03 614.50,516.32 614.73,518.60 614.99,520.89 615.28,523.17 615.62,525.45 615.99,527.72 616.39,529.99 616.83,532.25 617.31,534.51 617.82,536.76 618.37,539.00 618.95,541.24 619.57,543.47 620.23,545.68 620.91,547.89 621.64,550.09 622.40,552.28 623.19,554.46 624.02,556.63 624.89,558.78 625.78,560.92 626.71,563.05 627.68,565.17 628.68,567.27 629.71,569.35 630.78,571.42 631.88,573.48 633.01,575.51 634.17,577.53 635.37,579.54 636.60,581.52 637.86,583.49 639.15,585.44 640.47,587.37 641.83,589.28 643.21,591.16 644.63,593.03 646.07,594.88 647.55,596.70 649.05,598.50 650.58,600.28 652.14,602.03 653.73,603.77 655.35,605.47 657.00,607.15 658.67,608.81 660.37,610.44 662.09,612.05 663.85,613.63 665.62,615.18 667.42,616.70 669.25,618.20 671.10,619.67 672.98,621.11 674.88,622.52 676.80,623.90 678.74,625.25 680.71,626.58 682.70,627.87 684.71,629.13 686.73,630.36 688.78,631.56 690.85,632.72 692.94,633.86 695.05,634.96 697.18,636.03 699.32,637.07 701.48,638.07 703.66,639.04 705.85,639.98 708.06,640.88 710.28,641.75 712.52,642.58 714.78,643.38 717.04,644.14 719.32,644.87 721.61,645.56 723.92,646.22 726.23,646.84 728.56,647.42 730.89,647.97 733.24,648.48 735.59,648.95 737.95,649.39 740.32,649.79 742.70,650.16 745.09,650.48 747.48,650.77 749.87,651.02 752.27,651.24 754.68,651.41 757.09,651.55 759.50,651.65 761.91,651.71 764.33,651.74 766.75,651.72 769.17,651.67 771.59,651.58 774.01,651.45 776.42,651.29 778.84,651.09 781.25,650.84 783.66,650.56 786.07,650.25 788.47,649.89 790.87,649.50 793.27,649.06 795.65,648.59 798.04,648.09 800.41,647.54 802.78,646.96 805.13,646.34 807.48,645.68 809.82,644.99 812.15,644.25 814.47,643.48 816.78,642.68 819.08,641.84 821.36,640.96 823.63,640.04 825.89,639.09 828.14,638.10 830.37,637.08 832.58,636.02 834.78,634.93 836.96,633.80 839.12,632.64 841.27,631.44 843.40,630.21 845.51,628.94 847.60,627.64 849.68,626.31 851.73,624.94 853.76,623.54 855.77,622.11 857.76,620.65 859.73,619.15 861.67,617.63 863.59,616.07 865.49,614.48 867.36,612.86 869.21,611.21 871.03,609.53 872.82,607.82 874.60,606.08 876.34,604.32 878.06,602.52 879.74,600.70 881.41,598.85 883.04,596.97 884.64,595.07 886.22,593.14 887.76,591.19 889.28,589.21 890.76,587.20 892.21,585.18 893.64,583.12 895.03,581.05 896.38,578.95 897.71,576.83 899.00,574.69 900.26,572.53 901.49,570.35 902.68,568.14 903.84,565.92 904.96,563.68 906.05,561.42 907.10,559.14 908.12,556.84 909.10,554.53 910.05,552.20 910.96,549.86 911.83,547.50 912.67,545.12 913.47,542.73 914.23,540.33 914.95,537.91 915.64,535.49 916.29,533.05 916.90,530.60 917.47,528.14 918.01,525.66 918.50,523.18 918.96,520.69 919.38,518.20 919.76,515.69 920.10,513.18 920.39,510.66 920.66,508.14 920.88,505.61 921.06,503.08 921.20,500.54 921.30,498.00 921.36,495.46 921.38,492.91 921.36,490.37 921.31,487.82 921.21,485.27 921.07,482.73 920.89,480.18 920.67,477.64 920.41,475.10 920.11,472.56 919.77,470.03 919.39,467.50 918.98,464.97 918.52,462.46 918.02,459.94 917.48,457.44 916.90,454.94 916.28,452.45 915.63,449.97 914.93,447.50 914.20,445.04 913.42,442.58 912.61,440.15 911.76,437.72 910.87,435.30 909.94,432.90 908.97,430.51 907.97,428.14 906.92,425.78 905.84,423.43 904.73,421.11 903.57,418.80 902.38,416.50 901.15,414.23 899.89,411.97 898.59,409.73 897.25,407.51 895.88,405.31 894.48,403.14 893.04,400.98 891.56,398.85 890.05,396.73 888.51,394.64 886.93,392.58 885.32,390.54 883.68,388.52 882.01,386.53 880.30,384.56 878.56,382.62 876.79,380.71 874.99,378.82 873.16,376.96 871.30,375.13 869.41,373.33 867.49,371.56 865.54,369.81 863.57,368.10 861.57,366.42 859.54,364.77 857.48,363.14 855.39,361.56 853.29,360.00 851.15,358.47 848.99,356.98 846.81,355.53 844.60,354.10 842.37,352.71 840.12,351.36 837.84,350.04 835.55,348.75 833.23,347.50 830.89,346.29 828.53,345.11 826.15,343.97 823.76,342.87 821.34,341.80 818.91,340.77 816.46,339.78 814.00,338.83 811.51,337.92 809.02,337.04 806.51,336.21 803.98,335.41 801.44,334.65 798.89,333.93 796.32,333.26 793.75,332.62 791.16,332.02 788.57,331.46 785.96,330.95 783.34,330.47 780.72,330.04 778.09,329.64 775.45,329.29 772.80,328.98 770.15,328.71 767.49,328.48 764.83,328.30 762.17,328.15 759.50,328.05 756.83,327.99 754.16,327.97 751.48,327.99 748.81,328.06 746.13,328.17 743.46,328.32 740.79,328.51 738.12,328.74 735.45,329.02 732.79,329.34 730.13,329.70 727.47,330.10 724.82,330.54 722.18,331.03 719.54,331.56 716.91,332.13 714.29,332.74 711.68,333.39 709.07,334.08 706.48,334.82 703.90,335.59 701.32,336.41 698.76,337.27 696.22,338.17 693.68,339.10 691.16,340.08 688.66,341.10 686.17,342.16 683.69,343.26 681.23,344.39 678.79,345.57 676.37,346.79 673.96,348.04 671.58,349.33 669.21,350.66 666.86,352.03 664.54,353.43 662.23,354.88 659.95,356.35 657.69,357.87 655.45,359.42 653.24,361.01 651.05,362.63 648.88,364.29 646.74,365.98 644.63,367.71 642.54,369.47 640.48,371.26 638.45,373.09 636.45,374.95 634.47,376.84 632.52,378.76 630.60,380.71 628.72,382.70 626.86,384.72 625.03,386.76 623.24,388.84 621.48,390.94 619.75,393.07 618.05,395.23 616.39,397.42 614.76,399.63 613.16,401.87 611.60,404.14 610.08,406.43 608.59,408.75 607.13,411.09 605.72,413.46 604.33,415.84 602.99,418.25 601.68,420.69 600.42,423.14 599.18,425.61 597.99,428.11 596.84,430.62 595.73,433.16 594.65,435.71 593.62,438.28 592.62,440.86 591.67,443.47 590.75,446.09 589.88,448.72 589.05,451.37 588.26,454.03 587.51,456.71 586.80,459.40 586.14,462.10 585.52,464.81 584.94,467.53 584.40,470.27 583.90,473.01 583.45,475.76 583.04,478.52 582.68,481.29 582.36,484.06 582.08,486.84 581.84,489.62 581.65,492.41 581.50,495.20 581.40,498.00 581.34,500.80 581.32,503.60 581.35,506.40 581.43,509.20 581.54,512.01 581.70,514.81 581.91,517.61 582.16,520.40 582.45,523.20 582.79,525.99 583.17,528.77 583.59,531.56 584.06,534.33 584.58,537.10 585.13,539.86 585.73,542.62 586.38,545.36 587.06,548.10 587.79,550.82 588.57,553.54 589.38,556.24 590.24,558.94 591.14,561.62 592.09,564.28 593.07,566.94 594.10,569.57 595.17,572.20 596.29,574.80 597.44,577.39 598.63,579.97 599.87,582.52 601.14,585.06 602.46,587.57 603.82,590.07 605.21,592.55 606.65,595.00 608.12,597.44 609.64,599.85 611.19,602.24 612.78,604.60 614.40,606.94 616.07,609.26 617.77,611.55 619.51,613.81 621.28,616.05 623.09,618.26 624.94,620.44 626.82,622.60 628.73,624.72 630.68,626.82 632.67,628.88 634.68,630.92 636.73,632.92 638.81,634.90 640.92,636.84 643.07,638.75 645.24,640.62 647.44,642.46 649.68,644.27 651.94,646.04 654.23,647.78 656.55,649.48 658.90,651.15 661.27,652.78 663.68,654.37 666.10,655.93 668.55,657.45 671.03,658.93 673.53,660.37 676.05,661.77 678.60,663.14 681.17,664.46 683.76,665.74 686.37,666.99 689.00,668.19 691.66,669.35 694.33,670.47 697.02,671.55 699.72,672.59 702.45,673.58 705.19,674.54 707.95,675.45 710.72,676.31 713.51,677.14 716.31,677.92 719.12,678.65 721.95,679.34 724.78,679.99 727.63,680.59 730.49,681.15 733.36,681.67 736.24,682.13 739.12,682.56 742.02,682.94 744.92,683.27 747.83,683.56 750.74,683.80 753.65,684.00 756.58,684.15 759.50,684.25 762.43,684.31 765.36,684.32 768.29,684.29 771.22,684.21 774.14,684.08 777.07,683.91 780.00,683.69 782.93,683.43 785.85,683.12 788.76,682.76 791.68,682.36 794.58,681.91 797.48,681.42 800.38,680.88 803.26,680.29 806.14,679.66 809.01,678.99 811.87,678.26 814.72,677.50 817.56,676.68 820.38,675.83 823.20,674.93 826.00,673.98 828.78,672.99 831.55,671.95 834.31,670.88 837.05,669.75 839.77,668.59 842.48,667.38 845.17,666.13 847.83,664.83 850.48,663.50 853.11,662.12 855.72,660.70 858.31,659.24 860.87,657.73 863.41,656.19 865.93,654.61 868.42,652.98 870.89,651.32 873.33,649.61 875.75,647.87 878.14,646.09 880.51,644.27 882.84,642.41 885.15,640.52 887.43,638.59 889.67,636.62 891.89,634.62 894.08,632.58 896.24,630.51 898.36,628.40 900.45,626.26 902.51,624.08 904.53,621.87 906.52,619.63 908.48,617.36 910.40,615.05 912.29,612.72 914.14,610.35 915.95,607.95 917.72,605.53 919.46,603.07 921.16,600.59 922.82,598.08 924.44,595.55 926.03,592.98 927.57,590.40 929.07,587.78 930.53,585.15 931.95,582.48 933.33,579.80 934.67,577.09 935.97,574.36 937.22,571.61 938.43,568.84 939.60,566.05 940.72,563.24 941.80,560.42 942.84,557.57 943.83,554.71 944.77,551.83 945.67,548.93 946.53,546.02 947.34,543.10 948.10,540.16 948.82,537.21 949.50,534.24 950.12,531.27 950.70,528.28 951.23,525.29 951.72,522.28 952.16,519.27 952.55,516.25 952.89,513.22 953.19,510.19 953.44,507.15 953.64,504.10 953.79,501.05 953.90,498.00 953.96,494.95 953.97,491.89 953.93,488.83 953.84,485.77 953.71,482.72 953.52,479.66 953.29,476.61 953.01,473.55 952.69,470.51 952.31,467.46 951.89,464.42 951.42,461.39 950.90,458.36 950.33,455.34 949.72,452.33 949.06,449.33 948.35,446.34 947.59,443.35 946.79,440.38 945.94,437.42 945.04,434.48 944.09,431.54 943.10,428.62 942.07,425.72 940.98,422.83 939.86,419.95 938.68,417.10 937.46,414.26 936.20,411.44 934.89,408.63 933.54,405.85 932.14,403.09 930.70,400.35 929.21,397.63 927.69,394.94 926.11,392.26 924.50,389.61 922.85,386.99 921.15,384.39 919.41,381.82 917.63,379.27 915.81,376.75 913.95,374.26 912.05,371.80 910.11,369.37 908.13,366.96 906.12,364.59 904.06,362.25 901.97,359.94 899.84,357.66 897.68,355.41 895.48,353.20 893.24,351.02 890.97,348.88 888.66,346.77 886.32,344.70 883.95,342.66 881.55,340.66 879.11,338.70 876.64,336.77 874.14,334.88 871.61,333.04 869.05,331.23 866.46,329.46 863.84,327.73 861.20,326.04 858.52,324.39 855.82,322.79 853.10,321.23 850.35,319.71 847.57,318.23 844.77,316.79 841.95,315.40 839.10,314.05 836.23,312.75 833.34,311.49 830.43,310.28 827.50,309.11 824.56,307.99 821.59,306.91 818.60,305.88 815.60,304.90 812.58,303.97 809.55,303.08 806.50,302.24 803.44,301.44 800.36,300.70 797.27,300.00 794.17,299.35 791.06,298.75 787.94,298.20 784.80,297.69 781.66,297.24 778.52,296.84 775.36,296.48 772.20,296.18 769.03,295.92 765.86,295.71 762.68,295.56 759.50,295.45 756.32,295.39 753.13,295.39 749.95,295.43 746.76,295.52 743.58,295.67 740.39,295.86 737.21,296.11 734.03,296.40 730.86,296.74 727.69,297.14 724.52,297.58 721.36,298.08 718.21,298.62 715.07,299.21 711.93,299.86 708.80,300.55 705.69,301.29 702.58,302.08 699.49,302.92 696.40,303.81 693.34,304.75 690.28,305.74 687.24,306.77 684.22,307.86 681.21,308.99 678.22,310.16 675.24,311.39 672.29,312.66 669.35,313.98 666.43,315.35 663.54,316.76 660.66,318.22 657.81,319.72 654.98,321.27 652.18,322.87 649.40,324.50 646.64,326.19 643.91,327.91 641.21,329.68 638.53,331.50 635.88,333.35 633.26,335.25 630.67,337.19 628.10,339.17 625.57,341.19 623.07,343.25 620.60,345.35 618.17,347.50 615.76,349.68 613.39,351.89 611.06,354.15 608.76,356.44 606.49,358.77 604.26,361.14 602.07,363.54 599.92,365.98 597.80,368.45 595.72,370.96 593.68,373.50 591.68,376.07 589.72,378.67 587.80,381.31 585.92,383.98 584.08,386.67 582.28,389.40 580.53,392.16 578.82,394.94 577.15,397.75 575.52,400.59 573.94,403.45 572.41,406.34 570.92,409.26 569.47,412.20 568.07,415.16 566.72,418.15 565.41,421.16 564.16,424.19 562.94,427.24 561.78,430.30 560.66,433.39 559.59,436.50 558.57,439.63 557.60,442.77 556.68,445.93 555.81,449.10 554.99,452.29 554.22,455.49 553.49,458.70 552.82,461.93 552.20,465.17 551.63,468.42 551.11,471.67 550.64,474.94 550.22,478.22 549.86,481.50 549.54,484.79 549.28,488.09 549.07,491.39 548.91,494.69 548.80,498.00 548.74,501.31 548.74,504.62 548.79,507.94 548.89,511.25 549.04,514.56 549.25,517.87 549.51,521.18 549.81,524.49 550.18,527.79 550.59,531.09 551.05,534.38 551.57,537.66 552.14,540.94 552.76,544.21 553.43,547.47 554.16,550.72 554.93,553.96 555.76,557.19 556.63,560.41 557.56,563.61 558.54,566.80 559.57,569.98 560.65,573.14 561.78,576.28 562.96,579.41 564.18,582.52 565.46,585.61 566.79,588.68 568.16,591.73 569.59,594.77 571.06,597.78 572.58,600.76 574.14,603.73 575.76,606.67 577.42,609.58 579.12,612.47 580.88,615.33 582.67,618.17 584.52,620.98 586.40,623.76 588.33,626.51 590.31,629.24 592.33,631.93 594.39,634.59 596.49,637.22 598.64,639.82 600.83,642.38 603.05,644.91 605.32,647.41 607.63,649.87 609.98,652.29 612.36,654.68 614.79,657.04 617.25,659.35 619.75,661.63 622.29,663.86 624.86,666.06 627.46,668.22 630.10,670.34 632.78,672.42 635.49,674.45 638.23,676.45 641.00,678.40 643.81,680.30 646.64,682.17 649.51,683.99 652.40,685.76 655.32,687.49 658.28,689.18 661.25,690.82 664.26,692.41 667.29,693.96 670.35,695.46 673.43,696.91 676.53,698.31 679.66,699.66 682.80,700.97 685.97,702.22 689.17,703.43 692.38,704.59 695.60,705.70 698.85,706.75 702.12,707.76 705.40,708.71 708.70,709.61 712.01,710.47 715.33,711.27 718.67,712.01 722.03,712.71 725.39,713.35 728.77,713.94 732.15,714.48 735.55,714.96 738.95,715.39 742.36,715.77 745.78,716.09 749.20,716.36 752.63,716.58 756.06,716.74 759.50,716.85 762.94,716.90 766.38,716.90 769.82,716.85 773.26,716.74 776.70,716.58 780.14,716.37 783.58,716.10 787.01,715.77 790.44,715.39 793.86,714.96 797.28,714.47 800.69,713.93 804.09,713.34 807.49,712.69 810.87,711.99 814.25,711.24 817.61,710.43 820.97,709.57 824.31,708.66 827.63,707.69 830.94,706.67 834.24,705.60 837.52,704.48 840.78,703.30 844.03,702.07 847.26,700.80 850.47,699.47 853.65,698.09 856.82,696.66 859.97,695.18 863.09,693.64 866.19,692.07 869.26,690.44 872.31,688.76 875.34,687.03 878.34,685.26 881.31,683.44 884.25,681.57 887.17,679.65 890.05,677.69 892.91,675.68 895.73,673.63 898.53,671.53 901.29,669.39 904.01,667.20 906.71,664.97 909.37,662.70 911.99,660.39 914.58,658.03 917.13,655.63 919.65,653.19 922.12,650.71 924.56,648.20 926.96,645.64 929.32,643.04 931.64,640.41 933.92,637.74 936.16,635.03 938.36,632.29 940.51,629.51 942.62,626.70 944.69,623.85 946.71,620.97 948.69,618.06 950.62,615.12 952.50,612.14 954.34,609.14 956.14,606.10 957.88,603.04 959.58,599.95 961.23,596.83 962.83,593.68 964.38,590.51 965.89,587.31 967.34,584.09 968.74,580.84 970.09,577.58 971.39,574.29 972.64,570.97 973.84,567.64 974.98,564.29 976.08,560.92 977.12,557.53 978.11,554.13 979.04,550.71 979.92,547.27 980.75,543.82 981.52,540.35 982.24,536.87 982.90,533.38 983.51,529.88 984.06,526.37 984.56,522.85 985.01,519.32 985.39,515.78 985.73,512.23 986.00,508.68 986.23,505.13 986.39,501.56 986.50,498.00" fill="none" stroke="#ffffff" stroke-width="1" stroke-dasharray="3.5 2.6" shape-rendering="crispEdges"/><g stroke="#ffffff" stroke-width="1" fill="none"><path d="M708.5 502V610.5M708.5 610.5H818M708.5 502L701.5 523M708.5 502L716 523M818 610.5L796 603M818 610.5L796 618"/><rect x="699.5" y="601.5" width="18" height="18"/><path d="M708.5 601V619M699 610.5H718"/><path d="M701 464L708.5 475L716.5 464M708.5 475V486"/><path d="M836 599L852 621.5M852 599L836 621.5"/><path d="M687.5 614V710M640 662.5H736"/></g></svg>
<div class="a" style="left:0px;top:120px;width:30px;height:748px;background:#323944;"></div>
<div class="a" style="left:0px;top:120px;width:28px;height:426px;background:#454b56;"></div>
<div class="a" style="left:28px;top:120px;width:2px;height:426px;background:#3a404a;"></div>
<div class="a" style="left:0px;top:120px;width:1px;height:426px;background:#a3b1c2;"></div>
<div class="a" style="left:1px;top:121px;width:26px;height:2px;background:#9dacbf;"></div>
<div class="a" style="left:1px;top:125px;width:26px;height:2px;background:#9dacbf;"></div>
<svg class="a" style="left:5px;top:132px" width="16" height="16" viewBox="0 0 16 16"><path d="M2 2l12 12" stroke="#ffffff" stroke-width="1"/><rect x="1" y="1" width="3" height="3" fill="#4fb2f2"/><rect x="13" y="13" width="3" height="3" fill="#4fb2f2"/></svg>
<svg class="a" style="left:5px;top:155px" width="16" height="16" viewBox="0 0 16 16"><path d="M2 2l12 12" stroke="#4fb2f2" stroke-width="1" stroke-dasharray="2 2"/><path d="M1 1l3 1-2 2zM15 15l-3-1 2-2z" fill="#4fb2f2"/><rect x="7" y="7" width="2" height="2" fill="#4fb2f2"/></svg>
<svg class="a" style="left:5px;top:178px" width="16" height="16" viewBox="0 0 16 16"><path d="M8.5 2.5A5 5 0 0 0 7 12.5h6" stroke="#ffffff" fill="none" stroke-width="1.1"/><rect x="7" y="1" width="3" height="3" fill="#4fb2f2"/><rect x="5" y="11" width="3" height="3" fill="#4fb2f2"/><rect x="12" y="11" width="3" height="3" fill="#4fb2f2"/></svg>
<svg class="a" style="left:5px;top:201px" width="16" height="16" viewBox="0 0 16 16"><path d="M8 1.5l6 4.5-2.3 7.5H4.3L2 6z" stroke="#ffffff" fill="none" stroke-width="1.2"/></svg>
<svg class="a" style="left:5px;top:224px" width="16" height="16" viewBox="0 0 16 16"><path d="M1.5 1.5h13v13h-13z" stroke="#ffffff" fill="none" stroke-width="1"/><rect x="0" y="0" width="3" height="3" fill="#4fb2f2"/><rect x="13" y="13" width="3" height="3" fill="#4fb2f2"/></svg>
<svg class="a" style="left:5px;top:247px" width="16" height="16" viewBox="0 0 16 16"><path d="M2 14A12 12 0 0 1 14 2" stroke="#ffffff" fill="none" stroke-width="1.2"/><path d="M15 11v5h-5z" fill="#ffffff"/><rect x="1" y="13" width="3" height="3" fill="#4fb2f2"/><rect x="4" y="5" width="3" height="3" fill="#4fb2f2"/><rect x="13" y="1" width="3" height="3" fill="#4fb2f2"/></svg>
<svg class="a" style="left:5px;top:270px" width="16" height="16" viewBox="0 0 16 16"><circle cx="8" cy="8" r="7" stroke="#ffffff" fill="none" stroke-width="1.2"/><path d="M8 8h6" stroke="#4fb2f2" stroke-dasharray="1.5 1"/><rect x="6" y="7" width="3" height="3" fill="#4fb2f2"/><rect x="13" y="7" width="3" height="3" fill="#4fb2f2"/></svg>
<svg class="a" style="left:5px;top:293px" width="16" height="16" viewBox="0 0 16 16"><path d="M4 13h8a3 3 0 0 0 0-6a4 4 0 0 0-8 0a3 3 0 0 0 0 6z" stroke="#ffffff" fill="none" stroke-width="1.2"/></svg>
<svg class="a" style="left:5px;top:316px" width="16" height="16" viewBox="0 0 16 16"><path d="M12 1C5 1 3 5 7 7.5S15 11 12 14H7" stroke="#ffffff" fill="none" stroke-width="1.2"/><rect x="11" y="0" width="3" height="3" fill="#4fb2f2"/><rect x="7" y="7" width="3" height="3" fill="#4fb2f2"/><rect x="7" y="13" width="3" height="3" fill="#4fb2f2"/></svg>
<svg class="a" style="left:5px;top:339px" width="16" height="16" viewBox="0 0 16 16"><ellipse cx="8" cy="8" rx="7" ry="5.5" stroke="#ffffff" fill="none" stroke-width="1.2"/><rect x="7" y="1" width="3" height="3" fill="#4fb2f2"/><rect x="0" y="7" width="3" height="3" fill="#4fb2f2"/><rect x="13" y="7" width="3" height="3" fill="#4fb2f2"/></svg>
<svg class="a" style="left:5px;top:362px" width="16" height="16" viewBox="0 0 16 16"><path d="M11 3A7 5.5 0 1 0 15 8" stroke="#ffffff" fill="none" stroke-width="1.2"/><rect x="11" y="1" width="3" height="3" fill="#4fb2f2"/><rect x="13" y="7" width="3" height="3" fill="#4fb2f2"/></svg>
<svg class="a" style="left:5px;top:385px" width="16" height="16" viewBox="0 0 16 16"><path d="M4.5 4V1.5h10v11H10" stroke="#ffffff" fill="none" stroke-width="1"/><path d="M2 5.5h6M6 3.5l2 2-2 2" stroke="#f8c440" fill="none" stroke-width="1"/><path d="M1.5 6v6H3" stroke="#4fb2f2" fill="none" stroke-width="1"/><circle cx="5.5" cy="12.5" r="2" stroke="#ffffff" fill="none" stroke-width="1.1"/><path d="M15 11v5h-5z" fill="#ffffff"/></svg>
<svg class="a" style="left:5px;top:408px" width="16" height="16" viewBox="0 0 16 16"><path d="M2.5 1.5h10v9M2.5 1.5v13h7" stroke="#ffffff" fill="none" stroke-width="1"/><circle cx="12.5" cy="13" r="2.2" stroke="#ffffff" fill="none" stroke-width="1.1"/><rect x="1" y="0" width="3" height="3" fill="#4fb2f2"/></svg>
<svg class="a" style="left:5px;top:431px" width="16" height="16" viewBox="0 0 16 16"><g fill="#4fb2f2"><rect x="2" y="2" width="2" height="2"/><rect x="11" y="2" width="2" height="2"/><rect x="6.5" y="6.5" width="2" height="2"/><rect x="2" y="11" width="2" height="2"/><rect x="11" y="11" width="2" height="2"/></g></svg>
<svg class="a" style="left:5px;top:454px" width="16" height="16" viewBox="0 0 16 16"><rect x="1.5" y="1.5" width="12" height="12" stroke="#ffffff" fill="none" stroke-width="1.2"/><path d="M3 8l5-5M3 12l9-9M7 12l5-5" stroke="#5aa8e8" stroke-width="1"/></svg>
<svg class="a" style="left:5px;top:477px" width="16" height="16" viewBox="0 0 16 16"><rect x="1" y="1" width="14" height="14" stroke="#4fb2f2" fill="none" stroke-width="1.2"/><circle cx="8" cy="8" r="3.5" stroke="#4fb2f2" fill="none" stroke-width="1.2"/></svg>
<svg class="a" style="left:5px;top:500px" width="16" height="16" viewBox="0 0 16 16"><rect x="1" y="1" width="14" height="2" fill="#7ed37e"/><g fill="#e8eaee"><rect x="1" y="4" width="4" height="4"/><rect x="6" y="4" width="4" height="4"/><rect x="11" y="4" width="4" height="4"/><rect x="1" y="9" width="4" height="4"/><rect x="6" y="9" width="4" height="4"/><rect x="11" y="9" width="4" height="4"/></g></svg>
<svg class="a" style="left:5px;top:523px" width="16" height="16" viewBox="0 0 16 16"><rect x="1.5" y="1.5" width="12" height="12" stroke="#ffffff" fill="none" stroke-width="1.2"/><path d="M3 9l2.5-5 2.5 5M4 7.5h3" stroke="#f8c440" fill="none" stroke-width="1.2"/><path d="M9 5h3M9 7h3M3 10.5h9M3 12h9" stroke="#c8d6e8" stroke-width="0.9"/></svg>
<div class="a" style="left:0px;top:868px;width:1396px;height:23px;background:#2b2e33;"></div>
<div class="a" style="left:0px;top:868px;width:30px;height:23px;background:#323944;"></div>
<div class="a" style="left:31px;top:868px;width:23px;height:22px;background:#424952;"></div>
<div class="a" style="left:56px;top:868px;width:23px;height:22px;background:#424952;"></div>
<div class="a" style="left:81px;top:868px;width:23px;height:22px;background:#424952;"></div>
<div class="a" style="left:106px;top:868px;width:23px;height:22px;background:#424952;"></div>
<div class="a" style="left:131px;top:868px;width:23px;height:22px;background:#424952;"></div>
<div class="a" style="left:156px;top:868px;width:75px;height:22px;background:#52667e;"></div>
<div class="a" style="left:233px;top:868px;width:82px;height:22px;background:#424952;"></div>
<div class="a" style="left:317px;top:868px;width:82px;height:22px;background:#424952;"></div>
<div class="a" style="left:401px;top:868px;width:46px;height:22px;background:#424952;"></div>
<svg class="a" style="left:37px;top:876px" width="16" height="7" viewBox="0 0 16 7"><path d="M0 7L8 0l8 7z" fill="#fff"/></svg>
<svg class="a" style="left:63px;top:872px" width="10" height="13" viewBox="0 0 10 13"><rect x="0" y="0" width="1.5" height="13" fill="#9aa3ad"/><path d="M9 0v13L3 6.5z" fill="#9aa3ad"/></svg>
<svg class="a" style="left:88px;top:872px" width="10" height="13" viewBox="0 0 10 13"><path d="M9 0v13L3 6.5z" fill="#9aa3ad"/></svg>
<svg class="a" style="left:112px;top:872px" width="10" height="13" viewBox="0 0 10 13"><path d="M1 0v13l6-6.5z" fill="#9aa3ad"/></svg>
<svg class="a" style="left:137px;top:872px" width="10" height="13" viewBox="0 0 10 13"><path d="M1 0v13l6-6.5z" fill="#9aa3ad"/><rect x="8.5" y="0" width="1.5" height="13" fill="#9aa3ad"/></svg>
<div class="a tx" style="left:175px;top:867px;font-family:'Liberation Serif',serif;font-size:18px;font-weight:bold;color:#fff;line-height:22px">模型</div>
<div class="a tx" style="left:252px;top:867px;font-family:'Liberation Serif',serif;font-size:18px;color:#e8e8e8;line-height:22px">布局1</div>
<div class="a tx" style="left:336px;top:867px;font-family:'Liberation Serif',serif;font-size:18px;color:#e8e8e8;line-height:22px">布局2</div>
<div class="a tx" style="left:418px;top:867px;font-size:18px;color:#fff;line-height:22px">+</div>
<div class="a" style="left:0px;top:891px;width:1396px;height:4px;background:#323843;"></div>
<div class="a" style="left:0px;top:895px;width:1396px;height:100px;background:#2b2e33;"></div>
<div class="a" style="left:1px;top:896px;width:24px;height:98px;background:#454c57;"></div>
<svg class="a" style="left:8px;top:900px" width="9" height="9" viewBox="0 0 9 9"><path d="M0.5 0.5l8 8M8.5 0.5l-8 8" stroke="#6c7179" stroke-width="1.6"/></svg>
<div class="a" style="left:23px;top:896px;width:12px;text-align:center;font-family:'Liberation Serif',serif;font-size:16px;transform:scaleX(0.9);line-height:18px;color:#c9cdd2">H</div><div class="a" style="left:31px;top:896px;width:12px;text-align:center;font-family:'Liberation Serif',serif;font-size:16px;transform:scaleX(0.9);line-height:18px;color:#c9cdd2">E</div><div class="a" style="left:39px;top:896px;width:12px;text-align:center;font-family:'Liberation Serif',serif;font-size:16px;transform:scaleX(0.9);line-height:18px;color:#c9cdd2">L</div><div class="a" style="left:47px;top:896px;width:12px;text-align:center;font-family:'Liberation Serif',serif;font-size:16px;transform:scaleX(0.9);line-height:18px;color:#c9cdd2">I</div><div class="a" style="left:55px;top:896px;width:12px;text-align:center;font-family:'Liberation Serif',serif;font-size:16px;transform:scaleX(0.9);line-height:18px;color:#c9cdd2">X</div>
<div class="a" style="left:25px;top:913px;width:16px;text-align:center;font-size:15px;font-weight:100;line-height:18px;color:#d6d9dc">圈</div><div class="a" style="left:41px;top:913px;width:16px;text-align:center;font-size:15px;font-weight:100;line-height:18px;color:#d6d9dc">数</div><div class="a" style="left:63px;top:914px;width:12px;text-align:center;font-family:'Liberation Sans',sans-serif;font-size:15.5px;transform:scaleX(0.8);line-height:18px;color:#c9cdd2">=</div><div class="a" style="left:79px;top:914px;width:12px;text-align:center;font-family:'Liberation Sans',sans-serif;font-size:15.5px;transform:scaleX(0.8);line-height:18px;color:#c9cdd2">3</div><div class="a" style="left:87px;top:914px;width:12px;text-align:center;font-family:'Liberation Sans',sans-serif;font-size:15.5px;transform:scaleX(0.8);line-height:18px;color:#c9cdd2">.</div><div class="a" style="left:95px;top:914px;width:12px;text-align:center;font-family:'Liberation Sans',sans-serif;font-size:15.5px;transform:scaleX(0.8);line-height:18px;color:#c9cdd2">0</div><div class="a" style="left:103px;top:914px;width:12px;text-align:center;font-family:'Liberation Sans',sans-serif;font-size:15.5px;transform:scaleX(0.8);line-height:18px;color:#c9cdd2">0</div><div class="a" style="left:111px;top:914px;width:12px;text-align:center;font-family:'Liberation Sans',sans-serif;font-size:15.5px;transform:scaleX(0.8);line-height:18px;color:#c9cdd2">0</div><div class="a" style="left:119px;top:914px;width:12px;text-align:center;font-family:'Liberation Sans',sans-serif;font-size:15.5px;transform:scaleX(0.8);line-height:18px;color:#c9cdd2">0</div><div class="a" style="left:161px;top:913px;width:16px;text-align:center;font-size:15px;font-weight:100;line-height:18px;color:#d6d9dc">扭</div><div class="a" style="left:177px;top:913px;width:16px;text-align:center;font-size:15px;font-weight:100;line-height:18px;color:#d6d9dc">曲</div><div class="a" style="left:191px;top:914px;width:12px;text-align:center;font-family:'Liberation Sans',sans-serif;font-size:15.5px;transform:scaleX(0.8);line-height:18px;color:#c9cdd2">=</div><div class="a" style="left:201px;top:913px;width:16px;text-align:center;font-size:15px;font-weight:100;line-height:18px;color:#d6d9dc">逆</div><div class="a" style="left:217px;top:913px;width:16px;text-align:center;font-size:15px;font-weight:100;line-height:18px;color:#d6d9dc">时</div><div class="a" style="left:233px;top:913px;width:16px;text-align:center;font-size:15px;font-weight:100;line-height:18px;color:#d6d9dc">针</div>
<div class="a" style="left:25px;top:931px;width:16px;text-align:center;font-size:15px;font-weight:100;line-height:18px;color:#d6d9dc">指</div><div class="a" style="left:41px;top:931px;width:16px;text-align:center;font-size:15px;font-weight:100;line-height:18px;color:#d6d9dc">定</div><div class="a" style="left:57px;top:931px;width:16px;text-align:center;font-size:15px;font-weight:100;line-height:18px;color:#d6d9dc">底</div><div class="a" style="left:73px;top:931px;width:16px;text-align:center;font-size:15px;font-weight:100;line-height:18px;color:#d6d9dc">面</div><div class="a" style="left:89px;top:931px;width:16px;text-align:center;font-size:15px;font-weight:100;line-height:18px;color:#d6d9dc">的</div><div class="a" style="left:105px;top:931px;width:16px;text-align:center;font-size:15px;font-weight:100;line-height:18px;color:#d6d9dc">圆</div><div class="a" style="left:121px;top:931px;width:16px;text-align:center;font-size:15px;font-weight:100;line-height:18px;color:#d6d9dc">心</div><div class="a" style="left:135px;top:932px;width:12px;text-align:center;font-family:'Liberation Sans',sans-serif;font-size:15.5px;transform:scaleX(0.8);line-height:18px;color:#c9cdd2">:</div>
<div class="a" style="left:25px;top:949px;width:16px;text-align:center;font-size:15px;font-weight:100;line-height:18px;color:#d6d9dc">指</div><div class="a" style="left:41px;top:949px;width:16px;text-align:center;font-size:15px;font-weight:100;line-height:18px;color:#d6d9dc">定</div><div class="a" style="left:57px;top:949px;width:16px;text-align:center;font-size:15px;font-weight:100;line-height:18px;color:#d6d9dc">底</div><div class="a" style="left:73px;top:949px;width:16px;text-align:center;font-size:15px;font-weight:100;line-height:18px;color:#d6d9dc">面</div><div class="a" style="left:89px;top:949px;width:16px;text-align:center;font-size:15px;font-weight:100;line-height:18px;color:#d6d9dc">半</div><div class="a" style="left:105px;top:949px;width:16px;text-align:center;font-size:15px;font-weight:100;line-height:18px;color:#d6d9dc">径</div><div class="a" style="left:121px;top:949px;width:16px;text-align:center;font-size:15px;font-weight:100;line-height:18px;color:#d6d9dc">或</div><div class="a" style="left:143px;top:950px;width:12px;text-align:center;font-family:'Liberation Sans',sans-serif;font-size:15.5px;transform:scaleX(0.8);line-height:18px;color:#c9cdd2">[</div><div class="a" style="left:153px;top:949px;width:16px;text-align:center;font-size:15px;font-weight:100;line-height:18px;color:#d6d9dc">直</div><div class="a" style="left:169px;top:949px;width:16px;text-align:center;font-size:15px;font-weight:100;line-height:18px;color:#d6d9dc">径</div><div class="a" style="left:183px;top:950px;width:12px;text-align:center;font-family:'Liberation Sans',sans-serif;font-size:15.5px;transform:scaleX(0.8);line-height:18px;color:#c9cdd2">(</div><div class="a" style="left:191px;top:950px;width:12px;text-align:center;font-family:'Liberation Serif',serif;font-size:16px;transform:scaleX(0.9);line-height:18px;color:#c9cdd2">D</div><div class="a" style="left:199px;top:950px;width:12px;text-align:center;font-family:'Liberation Sans',sans-serif;font-size:15.5px;transform:scaleX(0.8);line-height:18px;color:#c9cdd2">)</div><div class="a" style="left:207px;top:950px;width:12px;text-align:center;font-family:'Liberation Sans',sans-serif;font-size:15.5px;transform:scaleX(0.8);line-height:18px;color:#c9cdd2">]</div><div class="a" style="left:223px;top:950px;width:12px;text-align:center;font-family:'Liberation Sans',sans-serif;font-size:15.5px;transform:scaleX(0.8);line-height:18px;color:#c9cdd2"><</div><div class="a" style="left:231px;top:950px;width:12px;text-align:center;font-family:'Liberation Sans',sans-serif;font-size:15.5px;transform:scaleX(0.8);line-height:18px;color:#c9cdd2">1</div><div class="a" style="left:239px;top:950px;width:12px;text-align:center;font-family:'Liberation Sans',sans-serif;font-size:15.5px;transform:scaleX(0.8);line-height:18px;color:#c9cdd2">.</div><div class="a" style="left:247px;top:950px;width:12px;text-align:center;font-family:'Liberation Sans',sans-serif;font-size:15.5px;transform:scaleX(0.8);line-height:18px;color:#c9cdd2">0</div><div class="a" style="left:255px;top:950px;width:12px;text-align:center;font-family:'Liberation Sans',sans-serif;font-size:15.5px;transform:scaleX(0.8);line-height:18px;color:#c9cdd2">0</div><div class="a" style="left:263px;top:950px;width:12px;text-align:center;font-family:'Liberation Sans',sans-serif;font-size:15.5px;transform:scaleX(0.8);line-height:18px;color:#c9cdd2">0</div><div class="a" style="left:271px;top:950px;width:12px;text-align:center;font-family:'Liberation Sans',sans-serif;font-size:15.5px;transform:scaleX(0.8);line-height:18px;color:#c9cdd2">0</div><div class="a" style="left:279px;top:950px;width:12px;text-align:center;font-family:'Liberation Sans',sans-serif;font-size:15.5px;transform:scaleX(0.8);line-height:18px;color:#c9cdd2">></div><div class="a" style="left:287px;top:950px;width:12px;text-align:center;font-family:'Liberation Sans',sans-serif;font-size:15.5px;transform:scaleX(0.8);line-height:18px;color:#c9cdd2">:</div>
<div class="a" style="left:25px;top:971px;width:1371px;height:1px;background:#5c6269;"></div>
<div class="a" style="left:25px;top:974px;width:16px;text-align:center;font-size:15px;font-weight:100;line-height:18px;color:#d6d9dc">命</div><div class="a" style="left:41px;top:974px;width:16px;text-align:center;font-size:15px;font-weight:100;line-height:18px;color:#d6d9dc">令</div><div class="a" style="left:55px;top:975px;width:12px;text-align:center;font-family:'Liberation Sans',sans-serif;font-size:15.5px;transform:scaleX(0.8);line-height:18px;color:#c9cdd2">:</div>
<div class="a" style="left:75px;top:972px;width:1px;height:17px;background:#d8d8d8;"></div>
<div class="a" style="left:0px;top:995px;width:1396px;height:18px;background:#323944;"></div>
<div class="a tx" style="left:12px;top:1000px;font-size:13px;color:#f0f0f0;line-height:18px;letter-spacing:-0.2px">-128.9885, -335.4171, 0.0000</div>
<svg class="a" style="left:293px;top:1001px" width="15" height="16" viewBox="0 0 15 16"><g stroke="#fff" stroke-width="1" fill="none"><rect x="0.5" y="0.5" width="12" height="16"/><path d="M4.5 0v16M8.5 0v16M0 4.5h12M0 8.5h12"/></g><rect x="12.5" y="0" width="1.8" height="16" fill="#4fb2f2"/></svg>
<svg class="a" style="left:317px;top:1001px" width="15" height="16" viewBox="0 0 15 16"><g stroke="#fff" stroke-width="1" fill="none"><rect x="0.5" y="0.5" width="13" height="16"/></g><path d="M5 1v16M9 1v16M1 5h12M1 9h12" stroke="#4fb2f2" stroke-width="1"/></svg>
<svg class="a" style="left:341px;top:1001px" width="8" height="14" viewBox="0 0 8 14"><path d="M0.5 0v12M0.5 8.5h6V14" stroke="#fff" fill="none" stroke-width="1"/></svg>
<div class="a" style="left:362px;top:998px;width:20px;height:20px;background:#52667e;border:1px solid #4fb2f2"></div>
<div class="a" style="left:386px;top:998px;width:20px;height:20px;background:#52667e;border:1px solid #4fb2f2"></div>
<div class="a" style="left:410px;top:998px;width:20px;height:20px;background:#52667e;border:1px solid #4fb2f2"></div>
<div class="a" style="left:434px;top:998px;width:20px;height:20px;background:#52667e;border:1px solid #4fb2f2"></div>
<div class="a" style="left:458px;top:998px;width:20px;height:20px;background:#52667e;border:1px solid #4fb2f2"></div>
<div class="a" style="left:530px;top:998px;width:20px;height:20px;background:#52667e;border:1px solid #4fb2f2"></div>
<svg class="a" style="left:365px;top:1001px" width="15" height="15" viewBox="0 0 15 15"><circle cx="7" cy="10" r="5.8" stroke="#fff" fill="none" stroke-width="1.1"/><path d="M12 3L6 9h7" stroke="#4fb2f2" fill="none" stroke-width="1"/></svg>
<svg class="a" style="left:389px;top:1001px" width="15" height="15" viewBox="0 0 15 15"><path d="M1 14V1h13v14" stroke="#fff" fill="none" stroke-width="1.1"/><rect x="0.5" y="0.5" width="4" height="4" fill="none" stroke="#e04040" stroke-width="1"/></svg>
<svg class="a" style="left:413px;top:1001px" width="15" height="15" viewBox="0 0 15 15"><path d="M1 14L14 1" stroke="#fff" stroke-width="1"/><rect x="6" y="6" width="3" height="3" fill="none" stroke="#4fb2f2"/></svg>
<svg class="a" style="left:437px;top:1001px" width="15" height="15" viewBox="0 0 15 15"><path d="M3 15V2M1.5 4L3 1l1.5 3M3 13l5-4" stroke="#fff" fill="none" stroke-width="1"/><path d="M10 1l-4 5h3l-1 4 4-5h-3z" fill="#f8c440"/></svg>
<svg class="a" style="left:461px;top:1002px" width="16" height="14" viewBox="0 0 16 14"><path d="M1 5h7M4.5 1.5v7" stroke="#fff" stroke-width="1.3"/><rect x="6.5" y="8.5" width="8" height="4" fill="none" stroke="#4fb2f2" stroke-width="1.2"/></svg>
<svg class="a" style="left:486px;top:1003px" width="13" height="11" viewBox="0 0 13 11"><rect x="0" y="0" width="13" height="1.5" fill="#fff"/><rect x="0" y="3.5" width="13" height="2" fill="#fff"/><rect x="0" y="7.5" width="13" height="3" fill="#fff"/></svg>
<svg class="a" style="left:509px;top:1001px" width="15" height="15" viewBox="0 0 15 15"><path d="M0 4h6M3 1v6" stroke="#fff" stroke-width="1.2"/><rect x="6" y="6" width="4" height="4" fill="#fff"/><rect x="8.5" y="8.5" width="5" height="5" fill="none" stroke="#4fb2f2" stroke-width="1"/></svg>
<svg class="a" style="left:533px;top:1001px" width="15" height="15" viewBox="0 0 15 15"><g fill="#aab6c4"><rect x="6" y="1" width="2" height="2"/><rect x="9" y="1" width="2" height="2"/><rect x="12" y="1" width="2" height="2"/><rect x="12" y="4" width="2" height="2"/><rect x="12" y="7" width="2" height="2"/></g><rect x="1" y="6" width="8" height="8" fill="none" stroke="#4fb2f2" stroke-width="1.2" stroke-dasharray="1.5 1"/><rect x="3.5" y="8.5" width="3" height="3" fill="none" stroke="#4fb2f2" stroke-width="1"/><path d="M14 10l-2 4" stroke="#f8c440"/></svg>
</body></html>
